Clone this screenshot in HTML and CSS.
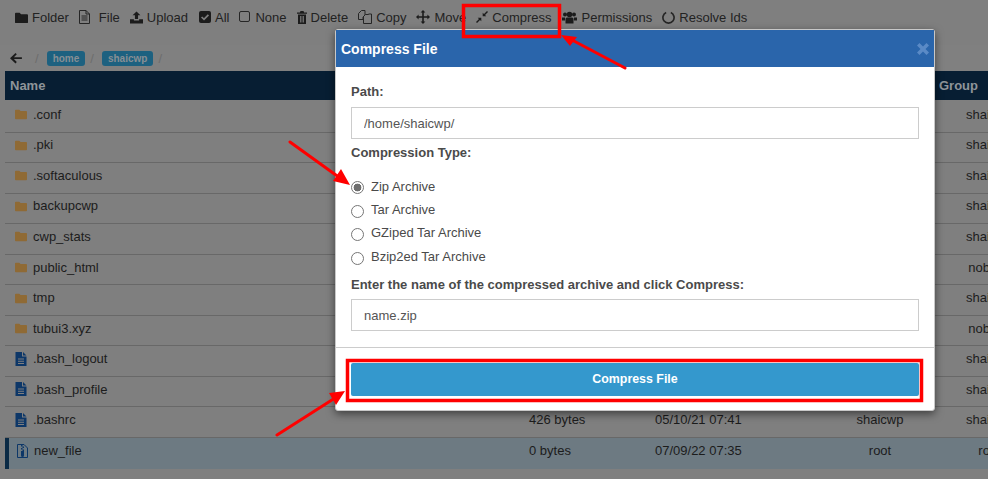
FILE: index.html
```html
<!DOCTYPE html>
<html>
  <head>
    <meta charset="UTF-8">
    <title>Compress File</title>
    <link rel="stylesheet" href="styles.css">
  </head>
  <body>
    <svg width="0" height="0" class="defs">
      <symbol id="i-folder" viewBox="0 0 14 12"><path d="M1 1h4l1.5 1.5H13a1 1 0 0 1 1 1V11a1 1 0 0 1-1 1H1a1 1 0 0 1-1-1V2a1 1 0 0 1 1-1z"/></symbol>
      <symbol id="i-doc" viewBox="0 0 11 14"><path d="M0 0h6.5v4.5H11V14H0zM7.5 0L11 3.5H7.5zM2.5 6.5v1h6v-1zM2.5 8.7v1h6v-1zM2.5 10.9v1h6v-1z" fill-rule="evenodd"/></symbol>
      <symbol id="i-file" viewBox="0 0 11 14"><path d="M.5.5h6.5l3.5 3.5v9.5H.5zM7 .5V4h3.5M2.5 6h6M2.5 8h6M2.5 10h6" fill="none" stroke="currentColor"/></symbol>
    </svg>

    <div class="toolbar">
      <span class="tool"><svg class="ic ic-13"><use href="#i-folder"/></svg>Folder</span>
      <span class="tool"><svg class="ic ic-file"><use href="#i-file"/></svg>File</span>
      <span class="tool tool-upload"><svg class="ic ic-13" viewBox="0 0 15 14"><path d="M7.5 0L12 4.5H9.3v4.2H5.7V4.5H3zM0 9h4.5v1.5h6V9H15v5H0z"/></svg>Upload</span>
      <span class="tool"><svg class="ic ic-12" viewBox="0 0 12 12"><rect width="12" height="12" rx="2"/><path d="M2.6 6l2.4 2.4 4.4-4.6" fill="none" stroke="#7f7f7f" stroke-width="1.7"/></svg>All</span>
      <span class="tool"><svg class="ic ic-12" viewBox="0 0 12 12"><rect x=".5" y=".5" width="10" height="10" rx="1.5" fill="none" stroke="currentColor"/></svg>None</span>
      <span class="tool"><svg class="ic ic-trash" viewBox="0 0 10 13"><path d="M3.5 0h3l.6 1.5H10v1.2H0V1.5h2.9zM1 3.5h8V13H1zM3 5v6.500h.8V5zM4.600 5v6.500h.8V5zM6.200 5v6.500H7V5z" fill-rule="evenodd"/></svg>Delete</span>
      <span class="tool"><svg class="ic ic-14" viewBox="0 0 14 14"><path d="M.5 3.500L3.500.5H7V5L5 7v2.500H.5zM5.500 6.500l2-2h3V4h3v9.500h-8z" fill="none" stroke="currentColor"/></svg>Copy</span>
      <span class="tool"><svg class="ic ic-14" viewBox="0 0 14 14"><path d="M7 0l2.400 2.600H7.800v3.600h3.600V4.600L14 7l-2.600 2.400V7.800H7.800v3.600h1.600L7 14l-2.400-2.600h1.600V7.800H2.600v1.600L0 7l2.600-2.400v1.600h3.600V2.600H4.600z"/></svg>Move</span>
      <span class="tool"><svg class="ic ic-12" viewBox="0 0 12 12"><path d="M0 11l3-3-1.300-1.300H5.300V10.300L4 9l-3 3zM12 1L9 4l1.300 1.300H6.700V1.700L8 3l3-3z"/></svg>Compress</span>
      <span class="tool"><svg class="ic ic-users" viewBox="0 0 15 12"><circle cx="3" cy="3" r="2"/><circle cx="12" cy="3" r="2"/><circle cx="7.500" cy="3" r="2.800"/><path d="M0 9V6h3v3zM15 9V6h-3v3zM3.500 12V7.500a1.500 1.500 0 0 1 1.500-1.500h5a1.500 1.500 0 0 1 1.500 1.500V12z"/></svg>Permissions</span>
      <span class="tool"><svg class="ic ic-13" viewBox="0 0 14 14"><path d="M4.500 1.600A6 6 0 1 0 9.500 1.600" fill="none" stroke="currentColor" stroke-width="1.800"/></svg>Resolve Ids</span>
    </div>

    <div class="crumbs">
      <svg class="back" viewBox="0 0 12 11"><path d="M5.500 0l1.300 1.300-2.900 3h8v1.800h-8l2.900 3L5.500 10.500 0 5.200z"/></svg>
      <span class="sep">/</span>
      <span class="badge">home</span>
      <span class="sep sep-tight">/</span>
      <span class="badge">shaicwp</span>
      <span class="sep sep-tight">/</span>
    </div>

    <div class="table">
      <div class="thead"><span>Name</span><span>Group</span></div>
      <div class="row"><span class="name"><svg class="ic-row folder"><use href="#i-folder"/></svg>.conf</span><span></span><span></span><span></span><span class="cell-c">shaicwp</span></div>
      <div class="row"><span class="name"><svg class="ic-row folder"><use href="#i-folder"/></svg>.pki</span><span></span><span></span><span></span><span class="cell-c">shaicwp</span></div>
      <div class="row"><span class="name"><svg class="ic-row folder"><use href="#i-folder"/></svg>.softaculous</span><span></span><span></span><span></span><span class="cell-c">shaicwp</span></div>
      <div class="row"><span class="name"><svg class="ic-row folder"><use href="#i-folder"/></svg>backupcwp</span><span></span><span></span><span></span><span class="cell-c">shaicwp</span></div>
      <div class="row"><span class="name"><svg class="ic-row folder"><use href="#i-folder"/></svg>cwp_stats</span><span></span><span></span><span></span><span class="cell-c">shaicwp</span></div>
      <div class="row"><span class="name"><svg class="ic-row folder"><use href="#i-folder"/></svg>public_html</span><span></span><span></span><span></span><span class="cell-c">nobody</span></div>
      <div class="row"><span class="name"><svg class="ic-row folder"><use href="#i-folder"/></svg>tmp</span><span></span><span></span><span></span><span class="cell-c">shaicwp</span></div>
      <div class="row"><span class="name"><svg class="ic-row folder"><use href="#i-folder"/></svg>tubui3.xyz</span><span></span><span></span><span></span><span class="cell-c">nobody</span></div>
      <div class="row"><span class="name"><svg class="ic-row doc"><use href="#i-doc"/></svg>.bash_logout</span><span></span><span></span><span></span><span class="cell-c">shaicwp</span></div>
      <div class="row"><span class="name"><svg class="ic-row doc"><use href="#i-doc"/></svg>.bash_profile</span><span></span><span></span><span></span><span class="cell-c">shaicwp</span></div>
      <div class="row"><span class="name"><svg class="ic-row doc"><use href="#i-doc"/></svg>.bashrc</span><span>426 bytes</span><span>05/10/21 07:41</span><span class="cell-c">shaicwp</span><span class="cell-c">shaicwp</span></div>
      <div class="row selected"><span class="name"><svg class="ic-row zip" viewBox="0 0 11 14"><path d="M.5.5h6.500l3.500 3.500v9.500H.5z" fill="none" stroke="currentColor"/><path d="M4 1h1.500v1.500H4zM5.500 2.500H7V4H5.500zM4 4h1.500v1.500H4zM5.500 5.500H7V7H5.500zM4 7h3v4.500a1.500 1.500 0 0 1-3 0z"/></svg>new_file</span><span>0 bytes</span><span>07/09/22 07:35</span><span class="cell-c">root</span><span class="cell-c">root</span></div>
    </div>

    <div class="modal">
      <div class="modal-head">
        <span>Compress File</span>
        <svg class="close" viewBox="0 0 12 12"><path d="M2.500 0L6 3.500 9.500 0 12 2.500 8.500 6 12 9.500 9.500 12 6 8.500 2.500 12 0 9.500 3.500 6 0 2.500z"/></svg>
      </div>
      <div class="modal-body">
        <label class="lbl">Path:</label>
        <input class="field" type="text" value="/home/shaicwp/">
        <label class="lbl lbl-type">Compression Type:</label>
        <div class="radios">
          <label class="radio"><input type="radio" name="ctype" checked>Zip Archive</label>
          <label class="radio"><input type="radio" name="ctype">Tar Archive</label>
          <label class="radio"><input type="radio" name="ctype">GZiped Tar Archive</label>
          <label class="radio"><input type="radio" name="ctype">Bzip2ed Tar Archive</label>
        </div>
        <label class="lbl lbl-name">Enter the name of the compressed archive and click Compress:</label>
        <input class="field" type="text" value="name.zip">
      </div>
      <div class="modal-foot">
        <button class="compress-btn">Compress File</button>
      </div>
    </div>

    <svg class="marks" viewBox="0 0 988 479">
      <rect x="463.500" y="5.500" width="96" height="31" fill="none" stroke="#f00" stroke-width="3.500"/>
      <rect x="347.500" y="360.500" width="574" height="40" fill="none" stroke="#f00" stroke-width="3.500"/>
      <path d="M625 68L572 40M290 142L340 178M277 435L335 398" stroke="#f00" stroke-width="3" stroke-linecap="round"/>
      <path d="M561 35L577 37 570 46zM350 185L333 181 341 169zM345 391L336 405 329 393z" fill="#f00"/>
    </svg>
  </body>
</html>
```

FILE: styles.css
```css
html, body { margin: 0; padding: 0; }
body {
  width: 988px;
  height: 479px;
  overflow: hidden;
  position: relative;
  background: #7f7f7f;
  color: #1c1c1c;
  font-family: "Liberation Sans", Arial, sans-serif;
  font-size: 13px;
}
.defs { position: absolute; }

.toolbar {
  height: 34px;
  padding: 0 0 0 15px;
  display: flex;
  align-items: center;
  gap: 10px;
  color: #222;
}
.tool { display: flex; align-items: center; gap: 4px; white-space: nowrap; }
.tool-upload { margin-right: 1px; }
.ic { fill: #1c1c1c; color: #262626; flex: none; }
.ic-14 { width: 14px; height: 14px; }
.ic-13 { width: 13px; height: 13px; }
.ic-12 { width: 12px; height: 12px; }
.ic-file { width: 11px; height: 14px; margin-right: 5px; }
.ic-trash { width: 10px; height: 13px; }
.ic-users { width: 15px; height: 13px; margin-right: 1px; }

.crumbs {
  height: 26px;
  margin: 11px 0 0 0;
  padding: 0 0 0 10px;
  display: flex;
  align-items: center;
  gap: 8px;
  background: #808080;
  color: #6d6d6d;
}
.back { width: 12px; height: 11px; fill: #1b1b1b; margin-right: 5px; }
.sep-tight { margin-left: -3px; }
.badge {
  background: #1d6180;
  color: #878f94;
  font-size: 10px;
  font-weight: bold;
  line-height: 15px;
  padding: 0 6px;
  border-radius: 3px;
}

.table { margin-left: 5px; width: 1024px; }
.thead {
  width: 983px;
  height: 29px;
  box-sizing: border-box;
  padding: 0 10px 1px 5px;
  display: flex;
  justify-content: space-between;
  align-items: center;
  background: #071e33;
  color: #8e949a;
  font-size: 13px;
  font-weight: bold;
  margin-bottom: 2px;
}
.row {
  height: 30.55px;
  box-sizing: border-box;
  padding-bottom: 5px;
  display: grid;
  grid-template-columns: 524px 126px 155px 140px 79px;
  align-items: center;
  border-bottom: 1px solid #686868;
  white-space: nowrap;
}
.row.selected { background: #6d7a82; border-bottom: none; box-shadow: inset 4px 0 #0a2a45; }
.row.selected .name { padding-left: 12px; }
.name { display: flex; align-items: center; gap: 6px; padding-left: 10px; }
.cell-c { text-align: center; }
.ic-row { width: 12px; height: 14px; flex: none; }
.folder { fill: #8f6a35; }
.doc { fill: #0d3768; }
.zip { fill: #0d3768; color: #0d3768; width: 11px; height: 14px; }

.modal {
  position: absolute;
  left: 335px;
  top: 29px;
  width: 600px;
  height: 382px;
  box-sizing: border-box;
  display: flex;
  flex-direction: column;
  background: #fff;
  border: 1px solid #c8c8c8;
  border-radius: 3px;
  box-shadow: 0 3px 9px rgba(0, 0, 0, 0.5);
  color: #4a4a4a;
}
.modal-head {
  height: 37px;
  flex: none;
  padding: 0 5px 0 5px;
  display: flex;
  align-items: center;
  justify-content: space-between;
  background: #2a65ab;
  color: #fff;
  font-size: 14px;
  font-weight: bold;
}
.close { width: 12px; height: 12px; fill: #5a8ac6; }
.modal-body {
  flex: 1;
  padding: 17px 15px 0 15px;
  display: flex;
  flex-direction: column;
}
.lbl { font-weight: bold; line-height: 15px; margin-bottom: 8px; }
.lbl-type { margin-top: 6px; margin-bottom: 0; }
.lbl-name { margin-bottom: 7px; }
.field {
  height: 32px;
  box-sizing: border-box;
  border: 1px solid #ccc;
  padding: 0 12px;
  font: 13px "Liberation Sans", Arial, sans-serif;
  color: #555;
  outline: none;
}
.radios {
  margin-top: 18.6px;
  margin-bottom: 13.5px;
  display: flex;
  flex-direction: column;
  gap: 8.4px;
}
.radio { display: flex; align-items: center; gap: 7px; line-height: 15px; }
.radio input {
  appearance: none;
  width: 13px;
  height: 13px;
  margin: 0;
  transform: translateY(2px);
  border: 1px solid #767676;
  border-radius: 50%;
  background: #fff;
  flex: none;
}
.radio input:checked { background: radial-gradient(circle, #6e6e6e 0 3.6px, #fff 4.2px); transform: translateY(1px); }
.modal-foot {
  height: 63px;
  flex: none;
  box-sizing: border-box;
  padding: 15px 15px 0 15px;
  border-top: 1px solid #ccc;
}
.compress-btn {
  width: 100%;
  height: 33px;
  padding: 0 0 2px 0;
  border: none;
  border-radius: 2px;
  background: #3498cd;
  color: #fff;
  font: bold 12.4px "Liberation Sans", Arial, sans-serif;
}

.marks {
  position: absolute;
  left: 0;
  top: 0;
  width: 988px;
  height: 479px;
  pointer-events: none;
}
```
